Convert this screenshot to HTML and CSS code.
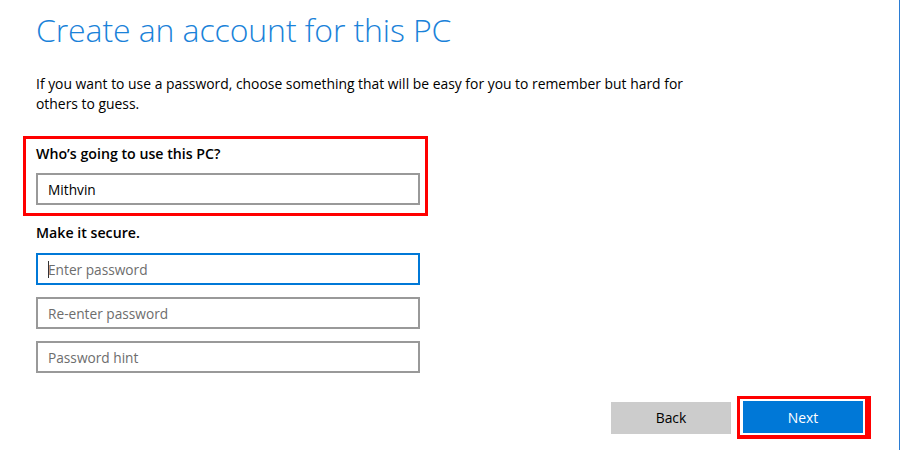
FILE: index.html
```html
<!DOCTYPE html>
<html>
<head>
<meta charset="utf-8">
<link rel="stylesheet" href="styles.css">
</head>
<body>
<div class="page">
  <main class="content">
    <h1 class="title">Create an account for this PC</h1>
    <p class="intro">If you want to use a password, choose something that will be easy for you to remember but hard for others to guess.</p>
    <section class="highlight user">
      <div class="label">Who’s going to use this PC?</div>
      <div class="field"><span class="value">Mithvin</span></div>
    </section>
    <div class="label secure">Make it secure.</div>
    <div class="fields">
      <div class="field focused"><span class="caret"></span><span class="placeholder">Enter password</span></div>
      <div class="field"><span class="placeholder">Re-enter password</span></div>
      <div class="field"><span class="placeholder">Password hint</span></div>
    </div>
  </main>
  <footer class="actions">
    <button class="btn back">Back</button>
    <div class="highlight next-wrap"><button class="btn next">Next</button></div>
  </footer>
</div>
</body>
</html>
```
FILE: styles.css
```css
html, body {
  margin: 0;
  padding: 0;
  background: #ffffff;
}
body {
  width: 900px;
  height: 450px;
  overflow: hidden;
  font-family: "Open Sans", "Noto Sans", sans-serif;
  color: #000;
}
.page {
  box-sizing: border-box;
  width: 900px;
  height: 450px;
  border-right: 1px solid #2b7cd3;
  display: flex;
  flex-direction: column;
  justify-content: space-between;
}
.content {
  padding-left: 36px;
  width: 384px;
}
.title {
  margin: 0;
  padding-top: 7px;
  font-size: 32px;
  font-weight: 300;
  letter-spacing: -0.1px;
  line-height: 46px;
  color: #1a82d9;
  white-space: nowrap;
}
.intro {
  margin: 21px 0 0 0;
  width: 670px;
  font-size: 13.9px;
  line-height: 20px;
}
.highlight {
  border: 3px solid #ff0000;
}
.user {
  margin: 22px 0 0 -13px;
  width: 384px;
  padding: 5px 5px 8px 10px;
}
.label {
  font-size: 14.2px;
  font-weight: 600;
  line-height: 20px;
}
.user .label {
  margin-bottom: 9px;
}
.secure {
  margin-top: 7px;
}
.fields {
  margin-top: 10px;
  display: flex;
  flex-direction: column;
  gap: 12px;
}
.field {
  box-sizing: border-box;
  width: 384px;
  height: 32px;
  border: 2px solid #999999;
  padding: 0 10px;
  display: flex;
  align-items: center;
  font-size: 13.7px;
}
.field.focused {
  border-color: #0078d7;
}
.value {
  color: #000;
}
.placeholder {
  color: #6d6d6d;
}
.caret {
  width: 1px;
  height: 17px;
  background: #333;
  margin-right: -1px;
}
.actions {
  display: flex;
  justify-content: flex-end;
  align-items: center;
  gap: 6px;
  padding: 0 28px 11px 0;
}
.btn {
  width: 120px;
  height: 32px;
  border: none;
  font-family: inherit;
  font-size: 13.9px;
  padding: 0;
}
.back {
  background: #cccccc;
  color: #000;
}
.next-wrap {
  border-width: 3px 6px 4px 3px;
  padding: 2px 2px 2px 3px;
  display: flex;
}
.next {
  background: #0078d7;
  color: #fff;
}
```
